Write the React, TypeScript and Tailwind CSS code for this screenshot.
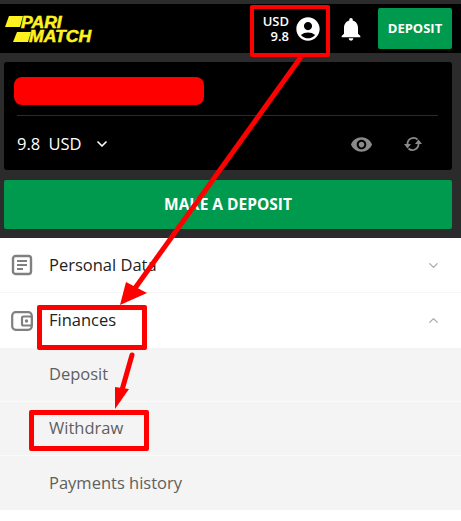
import { MdAccountCircle, MdNotifications, MdVisibility } from "react-icons/md";
import { ChevronDown, ChevronUp } from "lucide-react";

const font = "font-['Open_Sans',sans-serif]";

function Logo() {
  return (
    <div className="relative w-[90px] h-[30px] italic text-[#fff21f] font-['Liberation_Sans',sans-serif] text-[16px] leading-[13px] font-bold [-webkit-text-stroke:0.5px_#fff21f]">
      <svg className="absolute left-0 top-0" width="30" height="30" viewBox="0 0 30 30">
        <polygon points="4,2 18,2 15,13 0,13" fill="#fff21f" />
        <polygon points="12,18 26,18 23,28 8,28" fill="#fff21f" />
      </svg>
      <span className="absolute left-[16px] top-[2px] scale-x-110 origin-left">PARI</span>
      <span className="absolute left-[24px] top-[16px] scale-x-110 origin-left">MATCH</span>
    </div>
  );
}

function Article() {
  return (
    <svg width="22" height="22" viewBox="0 0 22 22" fill="none" stroke="#808080" strokeWidth="2.4">
      <rect x="2" y="2" width="18" height="18" rx="2.5" />
      <path d="M6 7h10M6 11h10M6 15h6" strokeWidth="2" />
    </svg>
  );
}

function Wallet() {
  return (
    <svg width="22" height="22" viewBox="0 0 22 22" fill="none">
      <rect x="1.2" y="2.2" width="19.6" height="17.6" rx="3.5" stroke="#808080" strokeWidth="2.2" />
      <rect x="11" y="6.5" width="9.8" height="9" rx="1.5" fill="#fff" stroke="#808080" strokeWidth="2.2" />
      <circle cx="15.5" cy="11" r="1.7" fill="#808080" />
    </svg>
  );
}

function Refresh() {
  return (
    <svg className="ml-[30px] mr-[19px]" width="20" height="20" viewBox="0 0 20 20" fill="none" stroke="#8a8a8a" strokeWidth="1.8">
      <path d="M4.5 10A6 6 0 0 1 14.5 5.5" />
      <path d="M15.5 10A6 6 0 0 1 5.5 14.5" />
      <polygon points="1,10 8,10 4.5,14.5" fill="#8a8a8a" stroke="none" />
      <polygon points="12,10 19,10 15.5,5.5" fill="#8a8a8a" stroke="none" />
    </svg>
  );
}

function Annotations() {
  return (
    <>
      <div className="absolute left-[250px] top-[5px] w-[80px] h-[52px] border-[4px] border-[#ff0000] rounded-[2px]" />
      <div className="absolute left-[37px] top-[305px] w-[110px] h-[45px] border-[5px] border-[#ff0000] rounded-[2px]" />
      <div className="absolute left-[29px] top-[410px] w-[120px] h-[41px] border-[5px] border-[#ff0000] rounded-[2px]" />
      <svg className="absolute left-0 top-0 pointer-events-none" width="461" height="521" viewBox="0 0 461 521">
        <line x1="301" y1="57" x2="133" y2="291" stroke="#ff0000" strokeWidth="5" />
        <polygon points="120,305 126,282 147,293" fill="#ff0000" />
        <line x1="132" y1="355" x2="122" y2="390" stroke="#ff0000" strokeWidth="5" strokeLinecap="round" />
        <polygon points="115,409 115,387 129,389" fill="#ff0000" />
      </svg>
    </>
  );
}

export default function App() {
  return (
    <div className={`relative w-[461px] h-[521px] overflow-hidden bg-white ${font}`}>
      <div className="bg-[#2b2b2b] pt-1 h-[238px]">
        <header className="h-[49px] bg-black flex items-center pl-[5px] pr-[9px]">
          <Logo />
          <div className="ml-auto flex items-center">
            <div className="text-right text-white text-[13px] font-semibold leading-[15px] mr-[5px]">
              <div>USD</div>
              <div>9.8</div>
            </div>
            <MdAccountCircle className="text-white mr-[15px]" size={28} />
            <MdNotifications className="text-white mr-[13px]" size={28} />
            <button className="w-[74px] h-[41px] bg-[#009a4e] rounded-[2px] text-white text-[13px] font-bold">DEPOSIT</button>
          </div>
        </header>
        <section className="mt-[9px] ml-1 mr-[9px] h-[108px] bg-black rounded-[3px] pt-[15px] px-[10px]">
          <div className="w-[190px] h-[28px] bg-[#ff0000] rounded-[8px]" />
          <div className="mt-[10px] ml-[3px] mr-[4px] h-[1px] bg-[#2b2b2b]" />
          <div className="flex items-center mt-[15px] ml-[3px] text-white">
            <span className="text-[16.5px] leading-[26px] [word-spacing:4px]">9.8 USD</span>
            <ChevronDown className="ml-[12px]" size={16} strokeWidth={2.5} />
            <MdVisibility className="ml-auto text-[#8a8a8a]" size={23} />
            <Refresh />
          </div>
        </section>
        <button className="block mt-[10px] ml-1 w-[448px] h-[49px] bg-[#009a4e] rounded-[2px] text-white text-[15.5px] font-bold">
          MAKE A DEPOSIT
        </button>
      </div>

      <div className="h-[55px] flex items-center pl-[11px] pr-[20px] border-b border-[#f6f6f6]">
        <Article />
        <span className="ml-[16px] pt-px text-[16.5px] text-[#222]">Personal Data</span>
        <ChevronDown className="ml-auto text-[#a8a8a8]" size={15} strokeWidth={2} />
      </div>
      <div className="h-[55px] flex items-center pl-[11px] pr-[20px]">
        <Wallet />
        <span className="ml-[16px] text-[16.5px] text-[#222]">Finances</span>
        <ChevronUp className="ml-auto text-[#a8a8a8]" size={15} strokeWidth={2} />
      </div>
      <div className="bg-[#f4f4f4] text-[#5f5f5f] text-[16.5px]">
        <div className="h-[54px] flex items-center pl-[49px] border-b border-[#fafafa]">Deposit</div>
        <div className="h-[54px] flex items-center pl-[49px] border-b border-[#fafafa]">Withdraw</div>
        <div className="h-[54px] flex items-center pl-[49px]">Payments history</div>
      </div>
      <Annotations />
    </div>
  );
}
